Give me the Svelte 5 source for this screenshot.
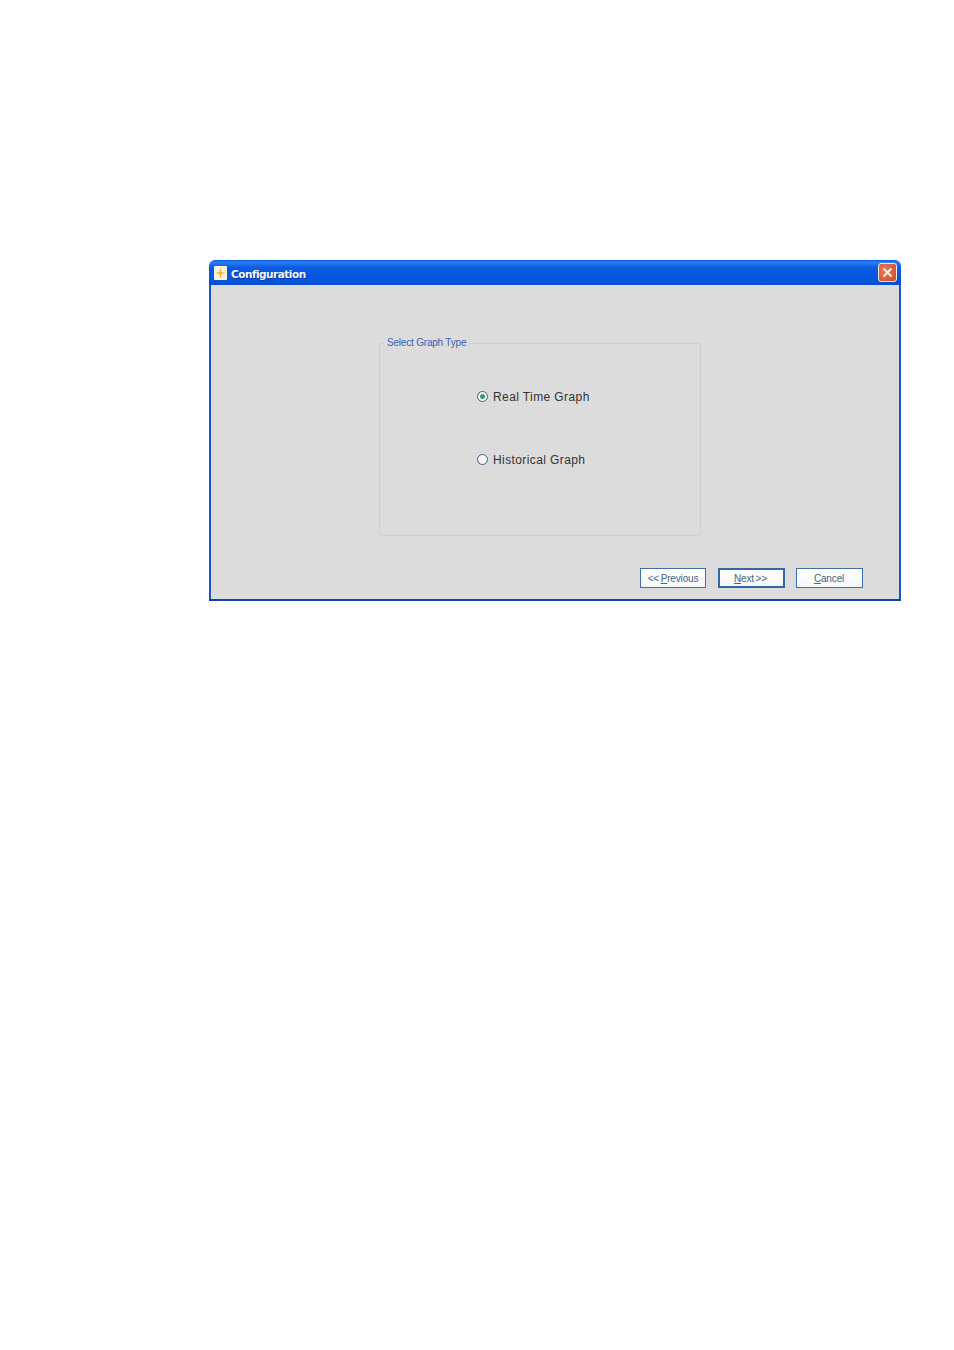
<script>
	const options = [
		{ label: 'Real Time Graph', checked: true },
		{ label: 'Historical Graph', checked: false }
	];
</script>

<div class="page">
	<div class="window">
		<div class="titlebar">
			<span class="app-icon">
				<svg width="13" height="14" viewBox="0 0 13 14">
					<rect width="13" height="14" rx="1" fill="#fdf3dc" />
					<path d="M6.500 1 L7.500 6 L12 7 L7.500 8 L6.500 13 L5.500 8 L1 7 L5.500 6 Z" fill="#f2b632" />
				</svg>
			</span>
			<span class="title">Configuration</span>
			<button class="close" aria-label="Close">
				<svg width="11" height="11" viewBox="0 0 11 11">
					<path d="M1.500 1.500 L9.500 9.500 M9.500 1.500 L1.500 9.500" stroke="#fdeee8" stroke-width="2" />
				</svg>
			</button>
		</div>

		<div class="content">
			<div class="group">
				<span class="legend">Select Graph Type</span>
				<div class="options">
					{#each options as opt}
						<label class="option">
							<span class="radio">
								{#if opt.checked}<span class="dot"></span>{/if}
							</span>
							<span>{opt.label}</span>
						</label>
					{/each}
				</div>
			</div>

			<div class="actions">
				<button class="btn prev">&lt;&lt; <u>P</u>revious</button>
				<button class="btn next"><u>N</u>ext &gt;&gt;</button>
				<button class="btn cancel"><u>C</u>ancel</button>
			</div>
		</div>
	</div>
</div>

<style>
	:global(body) {
		background: #fff;
	}
	.page {
		height: 1350px;
		box-sizing: border-box;
		padding: 260px 0 0 209px;
		font-family: 'Liberation Sans', Arial, sans-serif;
	}
	.window {
		width: 692px;
		height: 341px;
		box-sizing: border-box;
		display: flex;
		flex-direction: column;
		background: #dcdcdc;
		border-radius: 6px 6px 0 0;
		overflow: hidden;
		border-bottom: 2px solid #0f3fb0;
	}
	.titlebar {
		height: 25px;
		flex: none;
		display: flex;
		align-items: center;
		padding: 0 4px 0 5px;
		background: linear-gradient(#0a5fe0 0%, #2a7df2 10%, #0a5ae2 30%, #0455e0 75%, #0a4fd0 100%);
	}
	.app-icon {
		display: flex;
		width: 13px;
		height: 14px;
		margin-right: 4px;
	}
	.title {
		flex: 1;
		padding-top: 2px;
		color: #f4f8ff;
		font-family: 'DejaVu Sans', Verdana, sans-serif;
		font-size: 10.500px;
		font-weight: 700;
		letter-spacing: -0.5px;
		text-shadow: 1px 1px 0 #0a3a9c;
	}
	.close {
		width: 19px;
		height: 19px;
		padding: 0;
		display: flex;
		align-items: center;
		justify-content: center;
		border: 1px solid #f4e6e0;
		border-radius: 3px;
		background: radial-gradient(circle at 35% 35%, #e8795a, #cf4a22);
	}
	.content {
		flex: 1;
		position: relative;
		display: flex;
		flex-direction: column;
		border-left: 2px solid #1a55c8;
		border-right: 2px solid #1a55c8;
		padding: 58px 36px 0 168px;
	}
	.group {
		position: relative;
		width: 322px;
		height: 193px;
		box-sizing: border-box;
		border: 1px solid #d2d0c4;
		border-radius: 3px;
	}
	.legend {
		position: absolute;
		top: -7px;
		left: 4px;
		padding: 0 3px;
		background: #dcdcdc;
		color: #3a62b4;
		font-size: 10px;
		line-height: 12px;
		letter-spacing: -0.2px;
	}
	.options {
		display: flex;
		flex-direction: column;
		gap: 50px;
		padding: 46px 0 0 97px;
	}
	.option {
		display: flex;
		align-items: center;
		gap: 5px;
		height: 13px;
		color: #333;
		font-size: 12px;
		letter-spacing: 0.4px;
	}
	.radio {
		width: 11px;
		height: 11px;
		box-sizing: border-box;
		flex: none;
		display: flex;
		align-items: center;
		justify-content: center;
		border: 1px solid #3d5f8c;
		border-radius: 50%;
		background: #f4f6f6;
	}
	.dot {
		width: 5px;
		height: 5px;
		border-radius: 50%;
		background: #3f9a62;
	}
	.actions {
		display: flex;
		justify-content: flex-end;
		gap: 11px;
		margin-top: 32px;
	}
	.btn {
		height: 20px;
		padding: 0;
		box-sizing: border-box;
		background: linear-gradient(#ffffff, #f4f6fa);
		border: 1px solid #3f6ea8;
		color: #4f6480;
		font-family: 'Liberation Sans', Arial, sans-serif;
		font-size: 10px;
		letter-spacing: -0.15px;
		word-spacing: -1px;
	}
	.prev {
		width: 66px;
	}
	.next {
		width: 67px;
		margin-left: 1px;
		padding-right: 2px;
		border: 2px solid #3565a5;
	}
	.cancel {
		width: 67px;
		padding-right: 1px;
	}
</style>
